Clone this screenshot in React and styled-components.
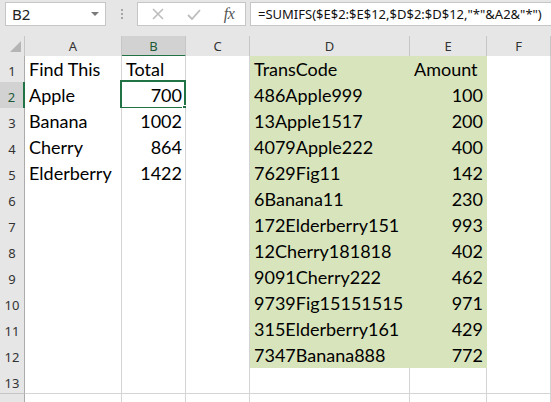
import React from "react";
import styled, { createGlobalStyle } from "styled-components";

const GlobalStyle = createGlobalStyle`
  html, body { margin: 0; padding: 0; background: #ffffff; }
  * { box-sizing: border-box; }
`;

const COLS = "25px 97px 64px 64px 160px 77px 64px";
const GRID = "#d4d4d4";
const GREEN_FILL = "#d8e4bc";
const ACCENT = "#217346";

const Window = styled.div`
  width: 551px;
  height: 402px;
  overflow: hidden;
  background: #ffffff;
  display: flex;
  flex-direction: column;
`;

const FormulaBar = styled.div`
  height: 36px;
  flex: none;
  background: #e6e6e6;
  display: flex;
  align-items: flex-start;
  padding: 2px 0 0 5px;
`;

const NameBox = styled.div`
  width: 101px;
  height: 24px;
  background: #fff;
  border: 1px solid #c6c6c6;
  display: flex;
  align-items: center;
  justify-content: space-between;
  padding: 0 6px 0 6px;
  font-family: "Noto Sans", "Open Sans", sans-serif;
  font-size: 15px;
  color: #222;
`;

const Caret = styled.span`
  width: 0;
  height: 0;
  border-left: 4px solid transparent;
  border-right: 4px solid transparent;
  border-top: 4px solid #7a7a7a;
`;

const Grip = styled.div`
  width: 31px;
  height: 24px;
  display: flex;
  flex-direction: column;
  align-items: center;
  justify-content: center;
  gap: 2px;
  span {
    width: 2px;
    height: 2px;
    background: #a6a6a6;
  }
`;

const FxBox = styled.div`
  width: 109px;
  height: 24px;
  background: #fff;
  border: 1px solid #c6c6c6;
  display: flex;
  align-items: center;
  padding: 0 0 0 13px;
`;

const IconSlot = styled.div`
  width: ${(p) => p.$w}px;
  display: flex;
  align-items: center;
  justify-content: center;
`;

const Fx = styled.span`
  font-family: "Liberation Serif", "DejaVu Serif", serif;
  font-style: italic;
  font-size: 16px;
  color: #555;
  letter-spacing: -0.5px;
`;

const FormulaInput = styled.div`
  flex: 1;
  height: 24px;
  margin-left: 4px;
  background: #fff;
  border: 1px solid #c6c6c6;
  border-right: none;
  padding-left: 7px;
  display: flex;
  align-items: center;
  font-family: "Noto Sans", "Open Sans", sans-serif;
  font-size: 13px;
  color: #111;
  white-space: nowrap;
  overflow: hidden;
`;

const Sheet = styled.div`
  flex: 1;
  display: flex;
  flex-direction: column;
`;

const Row = styled.div`
  display: grid;
  grid-template-columns: ${COLS};
  height: ${(p) => (p.$header ? 20 : 26)}px;
  flex: none;
`;

const Corner = styled.div`
  background: #e6e6e6;
  border-right: 1px solid #c6c6c6;
  border-bottom: 1px solid #ababab;
  display: flex;
  align-items: flex-end;
  justify-content: flex-end;
  padding: 0 3px 4px 0;
`;

const Triangle = styled.span`
  width: 0;
  height: 0;
  border-left: 11px solid transparent;
  border-bottom: 11px solid #b5b5b5;
`;

const ColHeader = styled.div`
  background: ${(p) => (p.$active ? "#d2d2d2" : "#e6e6e6")};
  border-right: 1px solid #c6c6c6;
  border-bottom: ${(p) => (p.$active ? `2px solid ${ACCENT}` : "1px solid #ababab")};
  display: flex;
  align-items: center;
  justify-content: center;
  font-family: "Noto Sans", "Open Sans", sans-serif;
  font-size: 13px;
  color: ${(p) => (p.$active ? "#1d5a36" : "#333")};
  padding-top: ${(p) => (p.$active ? 1 : 0)}px;
`;

const RowHeader = styled.div`
  background: ${(p) => (p.$active ? "#d2d2d2" : "#e6e6e6")};
  border-right: ${(p) => (p.$active ? `2px solid ${ACCENT}` : "1px solid #ababab")};
  border-bottom: 1px solid #c6c6c6;
  display: flex;
  align-items: center;
  justify-content: center;
  padding-top: 4px;
  font-family: "Noto Sans", "Open Sans", sans-serif;
  font-size: 13px;
  color: ${(p) => (p.$active ? "#1d5a36" : "#333")};
`;

const Cell = styled.div`
  position: relative;
  background: ${(p) => (p.$fill ? GREEN_FILL : "#fff")};
  border-right: 1px solid ${(p) => (p.$fill ? GREEN_FILL : GRID)};
  border-bottom: 1px solid ${(p) => (p.$fill ? GREEN_FILL : GRID)};
  font-family: "Lato", "Open Sans", sans-serif;
  font-size: 18px;
  line-height: 26px;
  color: #000;
  text-align: ${(p) => (p.$num ? "right" : "left")};
  padding: 0 ${(p) => (p.$num ? 3 : 0)}px 0 ${(p) => (p.$num ? 0 : 4)}px;
  white-space: nowrap;
`;

const Selection = styled.div`
  position: absolute;
  top: -2px;
  left: -2px;
  right: -1px;
  bottom: -1px;
  border: 2px solid ${ACCENT};
  pointer-events: none;
`;

const Handle = styled.span`
  position: absolute;
  right: -5px;
  bottom: -5px;
  width: 7px;
  height: 7px;
  background: ${ACCENT};
  border: 1px solid #fff;
`;

const data = [
  ["Find This", "Total", "", "TransCode", "Amount"],
  ["Apple", 700, "", "486Apple999", 100],
  ["Banana", 1002, "", "13Apple1517", 200],
  ["Cherry", 864, "", "4079Apple222", 400],
  ["Elderberry", 1422, "", "7629Fig11", 142],
  ["", "", "", "6Banana11", 230],
  ["", "", "", "172Elderberry151", 993],
  ["", "", "", "12Cherry181818", 402],
  ["", "", "", "9091Cherry222", 462],
  ["", "", "", "9739Fig15151515", 971],
  ["", "", "", "315Elderberry161", 429],
  ["", "", "", "7347Banana888", 772],
  ["", "", "", "", ""],
  ["", "", "", "", ""],
];

const letters = ["A", "B", "C", "D", "E", "F"];

export default function App() {
  return (
    <>
      <GlobalStyle />
      <Window>
        <FormulaBar>
          <NameBox>
            <span>B2</span>
            <Caret />
          </NameBox>
          <Grip>
            <span />
            <span />
            <span />
          </Grip>
          <FxBox>
            <IconSlot $w={14}>
              <svg width="12" height="12" viewBox="0 0 12 12">
                <path d="M1 1 L11 11 M11 1 L1 11" stroke="#bdbdbd" strokeWidth="1.6" fill="none" />
              </svg>
            </IconSlot>
            <IconSlot $w={58}>
              <svg width="14" height="11" viewBox="0 0 14 11">
                <path d="M1 6 L5 10 L13 1" stroke="#bdbdbd" strokeWidth="1.8" fill="none" />
              </svg>
            </IconSlot>
            <IconSlot $w={12}>
              <Fx>fx</Fx>
            </IconSlot>
          </FxBox>
          <FormulaInput>=SUMIFS($E$2:$E$12,$D$2:$D$12,"*"&amp;A2&amp;"*")</FormulaInput>
        </FormulaBar>
        <Sheet>
          <Row $header>
            <Corner>
              <Triangle />
            </Corner>
            {letters.map((l) => (
              <ColHeader key={l} $active={l === "B"}>
                {l}
              </ColHeader>
            ))}
          </Row>
          {data.map((r, i) => {
            const rowNum = i + 1;
            const inGreen = rowNum <= 12;
            return (
              <Row key={rowNum}>
                <RowHeader $active={rowNum === 2}>{rowNum <= 13 ? rowNum : ""}</RowHeader>
                <Cell>{r[0]}</Cell>
                <Cell $num={typeof r[1] === "number"}>
                  {r[1]}
                  {rowNum === 2 && (
                    <Selection>
                      <Handle />
                    </Selection>
                  )}
                </Cell>
                <Cell>{r[2]}</Cell>
                <Cell $fill={inGreen}>{r[3]}</Cell>
                <Cell $fill={inGreen} $num={typeof r[4] === "number"}>
                  {r[4]}
                </Cell>
                <Cell />
              </Row>
            );
          })}
        </Sheet>
      </Window>
    </>
  );
}
